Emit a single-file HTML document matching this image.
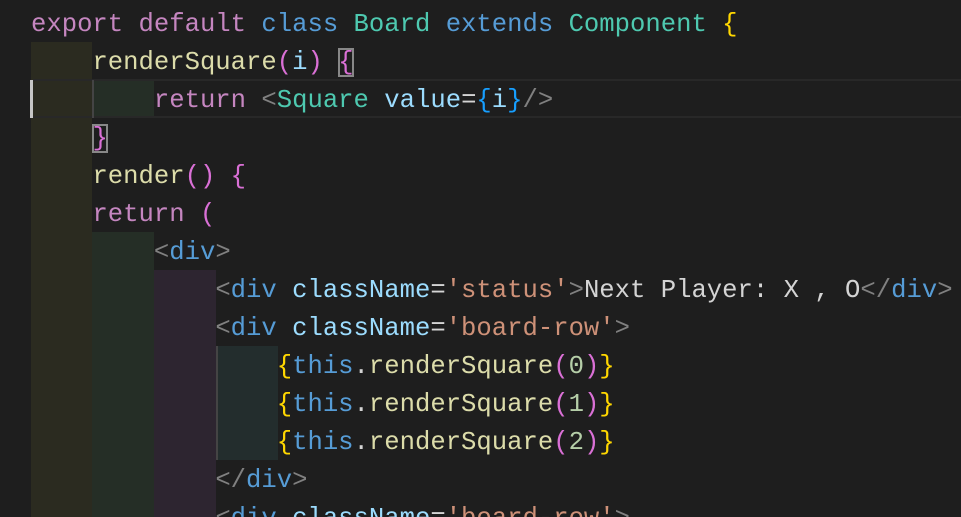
<!DOCTYPE html>
<html><head><meta charset="utf-8"><style>
html,body{margin:0;padding:0;background:#1e1e1e;width:961px;height:517px;overflow:hidden;position:relative}
.b{position:absolute}
.l{position:absolute;left:31px;height:38px;line-height:38px;font-family:"Liberation Mono",monospace;font-size:25.6px;white-space:pre;color:#d4d4d4}
.k{color:#c586c0}.c{color:#569cd6}.t{color:#4ec9b0}.y{color:#ffd700}.f{color:#dcdcaa}.p{color:#da70d6}.v{color:#9cdcfe}.g{color:#808080}.s{color:#ce9178}.n{color:#b5cea8}.bl{color:#179fff}
.box{outline:2px solid #888;outline-offset:-2px}
</style></head><body>
<div class="b" style="left:31px;top:42px;width:61px;height:475px;background:#2b2b20"></div>
<div class="b" style="left:92px;top:80px;width:62px;height:38px;background:#252e26"></div>
<div class="b" style="left:92px;top:232px;width:62px;height:285px;background:#252e26"></div>
<div class="b" style="left:154px;top:270px;width:62px;height:247px;background:#2d2530"></div>
<div class="b" style="left:216px;top:346px;width:62px;height:114px;background:#232d2d"></div>
<div class="b" style="left:33px;top:79px;width:928px;height:2px;background:#282828"></div>
<div class="b" style="left:33px;top:116px;width:928px;height:2px;background:#282828"></div>
<div class="b" style="left:30px;top:80px;width:3px;height:38px;background:#c6c6c6"></div>
<div class="b" style="left:92px;top:80px;width:2px;height:38px;background:#444"></div>
<div class="b" style="left:216px;top:346px;width:2px;height:114px;background:#444"></div>

<div class="l" style="top:6px"><span class="k">export</span> <span class="k">default</span> <span class="c">class</span> <span class="t">Board</span> <span class="c">extends</span> <span class="t">Component</span> <span class="y">{</span></div>
<div class="l" style="top:44px">    <span class="f">renderSquare</span><span class="p">(</span><span class="v">i</span><span class="p">)</span> <span class="p box">{</span></div>
<div class="l" style="top:82px">        <span class="k">return</span> <span class="g">&lt;</span><span class="t">Square</span> <span class="v">value</span>=<span class="bl">{</span><span class="v">i</span><span class="bl">}</span><span class="g">/&gt;</span></div>
<div class="l" style="top:120px">    <span class="p box">}</span></div>
<div class="l" style="top:158px">    <span class="f">render</span><span class="p">()</span> <span class="p">{</span></div>
<div class="l" style="top:196px">    <span class="k">return</span> <span class="p">(</span></div>
<div class="l" style="top:234px">        <span class="g">&lt;</span><span class="c">div</span><span class="g">&gt;</span></div>
<div class="l" style="top:272px">            <span class="g">&lt;</span><span class="c">div</span> <span class="v">className</span>=<span class="s">'status'</span><span class="g">&gt;</span>Next Player: X , O<span class="g">&lt;/</span><span class="c">div</span><span class="g">&gt;</span></div>
<div class="l" style="top:310px">            <span class="g">&lt;</span><span class="c">div</span> <span class="v">className</span>=<span class="s">'board-row'</span><span class="g">&gt;</span></div>
<div class="l" style="top:348px">                <span class="y">{</span><span class="c">this</span>.<span class="f">renderSquare</span><span class="p">(</span><span class="n">0</span><span class="p">)</span><span class="y">}</span></div>
<div class="l" style="top:386px">                <span class="y">{</span><span class="c">this</span>.<span class="f">renderSquare</span><span class="p">(</span><span class="n">1</span><span class="p">)</span><span class="y">}</span></div>
<div class="l" style="top:424px">                <span class="y">{</span><span class="c">this</span>.<span class="f">renderSquare</span><span class="p">(</span><span class="n">2</span><span class="p">)</span><span class="y">}</span></div>
<div class="l" style="top:462px">            <span class="g">&lt;/</span><span class="c">div</span><span class="g">&gt;</span></div>
<div class="l" style="top:500px;height:17px;overflow:hidden">            <span class="g">&lt;</span><span class="c">div</span> <span class="v">className</span>=<span class="s">'board-row'</span><span class="g">&gt;</span></div>
</body></html>
